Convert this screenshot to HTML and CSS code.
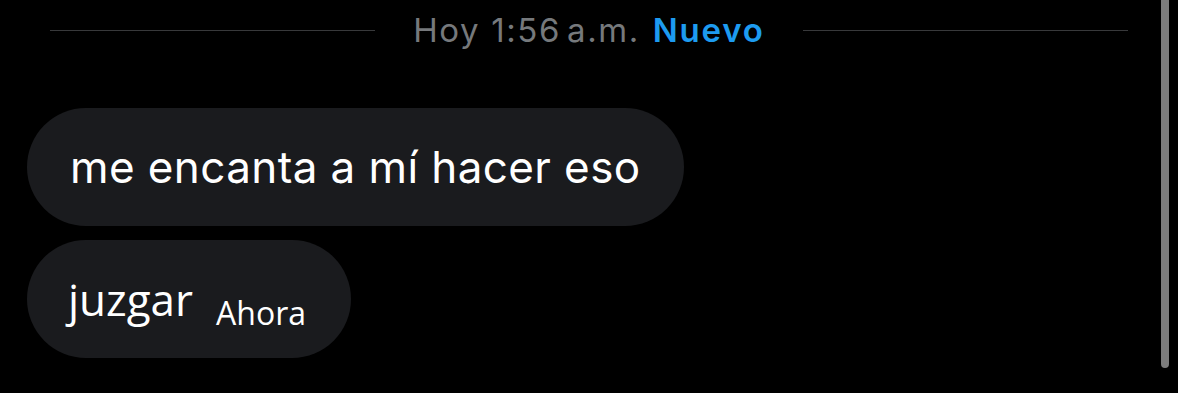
FILE: index.html
```html
<!DOCTYPE html>
<html lang="es">
<head>
<meta charset="utf-8">
<link rel="stylesheet" href="styles.css">
</head>
<body>
<div class="chat">
  <div class="divider">
    <span class="line"></span>
    <span class="stamp">Hoy 1:56<span class="ampm">a.m.</span> <b class="new">Nuevo</b></span>
    <span class="line"></span>
  </div>
  <div class="messages">
    <div class="bubble">me encanta a mí hacer eso</div>
    <div class="bubble last"><span class="word">juzgar</span><span class="time">Ahora</span></div>
  </div>
</div>
<div class="scrollbar"></div>
</body>
</html>
```
FILE: styles.css
```css
html, body {
  margin: 0;
  background: #000;
  height: 100%;
  overflow: hidden;
}
body {
  font-family: Inter, "Noto Sans", sans-serif;
  color: #fff;
  position: relative;
}
.chat {
  width: 1178px;
}
.divider {
  display: flex;
  align-items: center;
  gap: 38px;
  padding: 11px 50px 0 50px;
  height: 38px;
}
.line {
  flex: 1;
  height: 1px;
  background: #38393b;
}
.stamp {
  font-size: 33px;
  color: #76797c;
  letter-spacing: 1.6px;
  white-space: nowrap;
}
.ampm {
  margin-left: 6px;
}
.new {
  color: #1d9bf0;
  font-weight: 600;
  letter-spacing: 1.8px;
  margin-left: 2px;
}
.messages {
  display: flex;
  flex-direction: column;
  align-items: flex-start;
  gap: 14px;
  padding: 59px 0 0 27px;
}
.bubble {
  background: #1a1b1e;
  border-radius: 59px;
  height: 118px;
  box-sizing: border-box;
  padding: 0 43px;
  display: flex;
  align-items: center;
  font-size: 44px;
  letter-spacing: 0.4px;
  white-space: nowrap;
}
.bubble.last {
  display: block;
  padding: 0 45px 0 41px;
  line-height: 118px;
  font-family: "Open Sans", "Noto Sans", sans-serif;
  font-size: 44px;
  letter-spacing: 0;
}
.time {
  font-size: 32px;
  margin-left: 23px;
  position: relative;
  top: 9px;
}
.scrollbar {
  position: absolute;
  left: 1161px;
  top: -10px;
  width: 8px;
  height: 378px;
  border-radius: 4px;
  background: #7c7c7c;
}
```
